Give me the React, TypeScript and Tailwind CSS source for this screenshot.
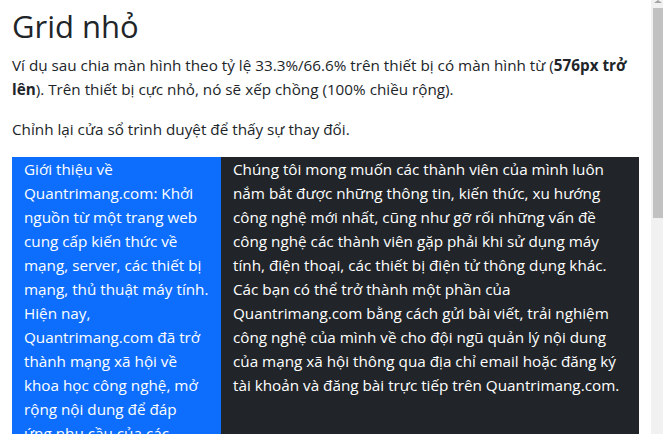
import React from 'react';

const font = { fontFamily: '"Open Sans", "Noto Sans", sans-serif' };

const leftLines = [
  'Giới thiệu về',
  'Quantrimang.com: Khởi',
  'nguồn từ một trang web',
  'cung cấp kiến thức về',
  'mạng, server, các thiết bị',
  'mạng, thủ thuật máy tính.',
  'Hiện nay,',
  'Quantrimang.com đã trở',
  'thành mạng xã hội về',
  'khoa học công nghệ, mở',
  'rộng nội dung để đáp',
  'ứng nhu cầu của các',
  'thành viên về nhiều lĩnh',
  'vực khác nhau.',
];

const rightLines = [
  'Chúng tôi mong muốn các thành viên của mình luôn',
  'nắm bắt được những thông tin, kiến thức, xu hướng',
  'công nghệ mới nhất, cũng như gỡ rối những vấn đề',
  'công nghệ các thành viên gặp phải khi sử dụng máy',
  'tính, điện thoại, các thiết bị điện tử thông dụng khác.',
  'Các bạn có thể trở thành một phần của',
  'Quantrimang.com bằng cách gửi bài viết, trải nghiệm',
  'công nghệ của mình về cho đội ngũ quản lý nội dung',
  'của mạng xã hội thông qua địa chỉ email hoặc đăng ký',
  'tài khoản và đăng bài trực tiếp trên Quantrimang.com.',
];

function Scrollbar() {
  return (
    <div className="w-3 shrink-0 h-[434px] bg-[#f1f1f1] flex flex-col items-end">
      <div className="w-[10px] h-2 flex justify-center">
        <div className="w-0 h-0 border-x-[4px] border-x-transparent border-b-[3px] border-b-[#a3a3a3]" />
      </div>
      <div className="w-[10px] h-[210px] bg-[#c1c1c1]" />
    </div>
  );
}

export default function App() {
  return (
    <div className="flex h-[434px] overflow-hidden bg-white text-[#212529] text-[15.25px] leading-6" style={font}>
      <div className="flex-1 min-w-0 px-3 pt-[8px]">
        <h1 className="text-[31px] font-medium leading-[1.2] mb-2">Grid nhỏ</h1>
        <p className="mb-4">
          <span className="block whitespace-nowrap">
            Ví dụ sau chia màn hình theo tỷ lệ 33.3%/66.6% trên thiết bị có màn hình từ (<b className="font-bold">576px trở</b>
          </span>
          <span className="block whitespace-nowrap">
            <b className="font-bold">lên</b>). Trên thiết bị cực nhỏ, nó sẽ xếp chồng (100% chiều rộng).
          </span>
        </p>
        <p className="mb-4">Chỉnh lại cửa sổ trình duyệt để thấy sự thay đổi.</p>
        <div className="grid grid-cols-3 text-white">
          <div className="col-span-1 bg-[#0d6efd] px-3">
            {leftLines.map((l, i) => (
              <span key={i} className="block whitespace-nowrap">{l}</span>
            ))}
          </div>
          <div className="col-span-2 bg-[#212529] px-3">
            {rightLines.map((l, i) => (
              <span key={i} className="block whitespace-nowrap">{l}</span>
            ))}
          </div>
        </div>
      </div>
      <Scrollbar />
    </div>
  );
}
